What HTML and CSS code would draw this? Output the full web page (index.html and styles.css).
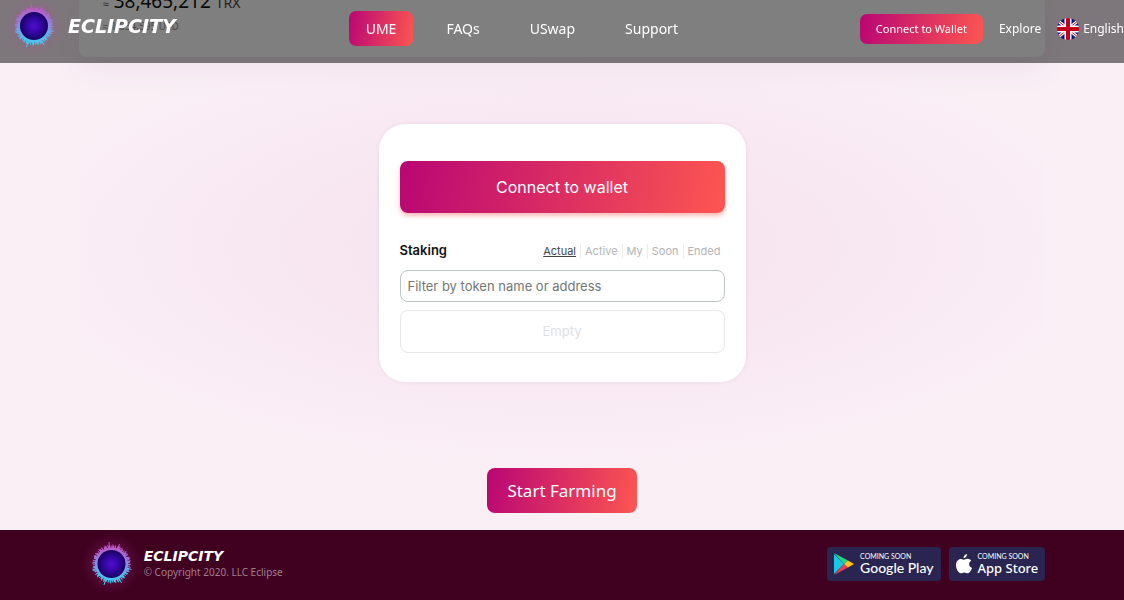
FILE: index.html
```html
<!DOCTYPE html>
<html lang="en">
<head>
<meta charset="utf-8">
<meta name="viewport" content="width=device-width, initial-scale=1">
<title>Eclipcity</title>
<link rel="stylesheet" href="styles.css">
</head>
<body>
<svg class="defs" aria-hidden="true">
  <defs>
    <radialGradient id="core"><stop offset="0" stop-color="#4f0fd0"/><stop offset=".5" stop-color="#3506a4"/><stop offset="1" stop-color="#180360"/></radialGradient>
    <linearGradient id="flare" gradientUnits="userSpaceOnUse" x1="30" y1="9" x2="30" y2="51"><stop offset="0" stop-color="#c94fc4"/><stop offset=".4" stop-color="#9a7be0"/><stop offset=".7" stop-color="#5fb4ee"/><stop offset="1" stop-color="#3ad0f2"/></linearGradient>
    <radialGradient id="halo"><stop offset=".5" stop-color="#c03aa8" stop-opacity=".2"/><stop offset="1" stop-color="#c03aa8" stop-opacity="0"/></radialGradient>
    <symbol id="sun" viewBox="0 0 60 60">
      <circle cx="30" cy="30" r="30" fill="url(#halo)"/>
      <circle cx="30" cy="30" r="16.500" fill="url(#flare)"/>
      <circle cx="30" cy="30" r="17" fill="none" stroke="url(#flare)" stroke-width="3" stroke-dasharray="1.500 .8 .8 1 2 .7 1 1.200"/>
      <circle cx="30" cy="30" r="17.500" fill="none" stroke="url(#flare)" stroke-width="4" stroke-dasharray=".8 2 .6 3.100 1 1.600 .7 4"/>
      <path stroke="url(#flare)" stroke-width="1" fill="none" d="M28 14L27.500 8M36 15L38 10M24 46L22.500 51M38 45L40 49M45 34L50 35.500M15 34L11 36"/>
      <circle cx="30" cy="30" r="14" fill="url(#core)"/>
    </symbol>
  </defs>
</svg>

<header class="topbar">
  <a class="brand" href="#"><svg class="brand-sun" aria-hidden="true"><use href="#sun"/></svg><span class="wordmark">ECLIPCITY</span></a>
  <nav class="menu">
    <a class="menu-link active" href="#">UME</a>
    <a class="menu-link" href="#">FAQs</a>
    <a class="menu-link" href="#">USwap</a>
    <a class="menu-link" href="#">Support</a>
  </nav>
  <div class="tools">
    <button class="wallet-small" type="button">Connect to Wallet</button>
    <a class="tool-link" href="#">Explore</a>
    <a class="language" href="#">
      <svg class="flag" viewBox="0 0 22 22" aria-hidden="true">
        <clipPath id="round"><circle cx="11" cy="11" r="11"/></clipPath>
        <g clip-path="url(#round)">
          <path fill="#12127a" d="M0 0h22v22H0z"/>
          <path stroke="#fff" stroke-width="3" d="M0 2l22 18M22 2L0 20"/>
          <path stroke="#c8102e" stroke-width="1" d="M0 2l22 18M22 2L0 20"/>
          <path stroke="#fff" stroke-width="7" d="M11 0v22M0 11h22"/>
          <path stroke="#c4001c" stroke-width="4" d="M11 0v22M0 11h22"/>
        </g>
      </svg>
      <span>English</span>
    </a>
  </div>
</header>

<main class="page">
  <section class="balance">
    <div class="balance-card">
      <p class="amount"><small>≈</small> 38,465,212 <span class="unit">TRX</span></p>
      <p class="converted">≈ 1,034,595 USD</p>
    </div>
  </section>
  <section class="farm">
    <div class="glow">
      <div class="staking">
        <button class="wallet" type="button">Connect to wallet</button>
        <div class="staking-head">
          <h2 class="title">Staking</h2>
          <div class="filters">
            <a class="filter current" href="#">Actual</a>
            <a class="filter" href="#">Active</a>
            <a class="filter" href="#">My</a>
            <a class="filter" href="#">Soon</a>
            <a class="filter" href="#">Ended</a>
          </div>
        </div>
        <input class="search" type="text" placeholder="Filter by token name or address" aria-label="Filter by token name or address">
        <div class="empty">Empty</div>
      </div>
    </div>
    <button class="start" type="button">Start Farming</button>
  </section>
</main>

<footer class="footer">
  <div class="legal">
    <svg class="foot-sun" aria-hidden="true"><use href="#sun"/></svg>
    <div>
      <div class="wordmark small">ECLIPCITY</div>
      <p class="copyright">© Copyright 2020. LLC Eclipse</p>
    </div>
  </div>
  <div class="stores">
    <a class="store" href="#">
      <svg class="play" viewBox="0 0 20 22" aria-hidden="true">
        <path fill="#16c7e8" d="M0 1v20l10-10z"/><path fill="#28d67c" d="M0 0l14 7.500-4 3.500z"/><path fill="#ee3d50" d="M0 22l14-7.500-4-3.500z"/><path fill="#ffc51c" d="M14 7.500l6 3.500-6 3.500-4-3.500z"/>
      </svg>
      <span class="store-text"><span class="soon">COMING SOON</span><span class="store-name google">Google Play</span></span>
    </a>
    <a class="store" href="#">
      <svg class="apple" viewBox="0 0 16 20" aria-hidden="true">
        <path fill="#fff" d="M11 0c.2 2-1.400 4.200-3.400 4.300C7.300 2.400 9 .4 11 0zM8 5.700c.8 0 1.900-1 3.600-1 1.500 0 2.900.8 3.600 2-3.100 1.800-2.600 6 .8 7.200-.8 2.300-2.500 5.300-4.300 5.300-1.300 0-1.800-.8-3.400-.8s-2.200.8-3.400.8C2.700 19.200 0 15 0 11.200c0-4 2.400-6.300 4.900-6.300 1.400 0 2.400.8 3.100.8z"/>
      </svg>
      <span class="store-text"><span class="soon">COMING SOON</span><span class="store-name">App Store</span></span>
    </a>
  </div>
</footer>
</body>
</html>
```

FILE: styles.css
```css
* { box-sizing: border-box; }

body {
  margin: 0;
  min-height: 100vh;
  display: flex;
  flex-direction: column;
  overflow-x: hidden;
  background: #fbeff6;
  color: #111;
  font-family: "Noto Sans", sans-serif;
}

a { color: inherit; text-decoration: none; }
p, h2 { margin: 0; }
button { border: 0; color: #fff; cursor: pointer; background: linear-gradient(100deg, #b90674, #fd5651); }
.defs { position: absolute; width: 0; height: 0; }

/* Translucent bar fixed over the scrolling page */
.topbar {
  position: fixed;
  inset: 0 0 auto;
  z-index: 2;
  display: flex;
  justify-content: space-between;
  align-items: center;
  padding: 11px 0 17px 4px;
  background: rgba(0, 0, 0, .5);
  color: #fff;
}
.brand { display: flex; align-items: center; gap: 4px; height: 35px; padding-bottom: 6px; }
.brand-sun { width: 60px; height: 60px; flex: none; }
.wordmark { font: italic bold 19px/24px "DejaVu Sans", sans-serif; color: #fff; }
.menu { display: flex; gap: 16px; margin-left: 8px; }
.menu-link { padding: 0 17px; border-radius: 7px; font-size: 14px; line-height: 35px; }
.active { background: linear-gradient(100deg, #b90674, #fd5651); }
.tools { display: flex; align-items: center; justify-content: flex-end; gap: 16px; font-size: 12px; white-space: nowrap; }
.wallet-small { padding: 0 16px; border-radius: 7px; font: 11px/30px "Noto Sans", sans-serif; }
.language { display: flex; align-items: center; gap: 4px; }
.flag { width: 22px; height: 22px; }

.page { flex: 1; display: flex; flex-direction: column; }
.balance { height: 57px; padding: 0 7%; display: flex; }
.balance-card {
  flex: 1;
  display: flex;
  flex-direction: column;
  justify-content: flex-end;
  padding: 0 24px 20px;
  border-radius: 0 0 8px 8px;
  background: #fff;
  box-shadow: 0 12px 32px rgba(90, 60, 90, .07);
}
.amount { font-size: 19px; line-height: 22px; }
.amount small { font-size: 11px; color: #555; }
.unit { font-size: 14px; color: #444; }
.converted { font-size: 10px; line-height: 22px; color: #999; }

.farm { flex: 1; display: flex; flex-direction: column; align-items: center; padding: 0 7% 17px; }
.glow {
  align-self: stretch;
  display: flex;
  justify-content: center;
  padding: 67px 0 86px;
  background: radial-gradient(ellipse 58% 54% at 50% 46%, #f6e4f0, #f7e7f1 50%, rgba(251, 239, 246, 0));
}
.staking {
  width: 367px;
  max-width: 100%;
  padding: 37px 21px 29px;
  border-radius: 26px;
  background: #fff;
  box-shadow: 0 0 4px rgba(90, 40, 70, .08);
  font-family: Inter, sans-serif;
}
.wallet { width: 100%; padding: 0; border-radius: 8px; font: 16px/52px Inter, sans-serif; box-shadow: 0 3px 4px rgba(253, 86, 81, .4); }
.staking-head { display: flex; justify-content: space-between; align-items: center; margin: 27px 0 9px; }
.title { font-size: 13px; font-weight: 600; line-height: 21px; }
.filters { display: flex; font-size: 11px; line-height: 14px; color: #b4b4b4; }
.filter { padding: 0 4px; border-left: 1px solid #ededed; }
.current { border: 0; color: #444; text-decoration: underline; }
.search { display: block; width: 100%; height: 32px; padding: 0 7px; border: 1px solid #bdc4c4; border-radius: 8px; font: 13px Inter, sans-serif; }
.search::placeholder { color: #757575; }
.empty { margin-top: 8px; border: 1px solid #e6e8e9; border-radius: 8px; font-size: 13px; line-height: 41px; text-align: center; color: #dde1e5; }
.start { padding: 0 20px; border-radius: 8px; font: 17px/45px "Noto Sans", sans-serif; }

.footer {
  display: flex;
  justify-content: space-between;
  align-items: center;
  height: 70px;
  padding: 0 7% 2px;
  background: #400020;
}
.legal { display: flex; align-items: center; }
.foot-sun { width: 65px; height: 60px; }
.small { font-size: 14px; line-height: 16px; }
.copyright { font-size: 10px; line-height: 16px; color: #a07f90; }
.stores { display: flex; gap: 8px; color: #fff; }
.store { display: flex; align-items: center; gap: 6px; height: 34px; padding: 0 7px; border-radius: 4px; background: #2a2550; }
.play { width: 20px; height: 22px; }
.apple { width: 16px; height: 20px; }
.store-text { display: flex; flex-direction: column; }
.soon { font: 7px/8px Lato, sans-serif; }
.store-name { font-size: 13px; font-weight: 500; line-height: 16px; }
.google { font-family: Lato, sans-serif; font-size: 14px; }
```
